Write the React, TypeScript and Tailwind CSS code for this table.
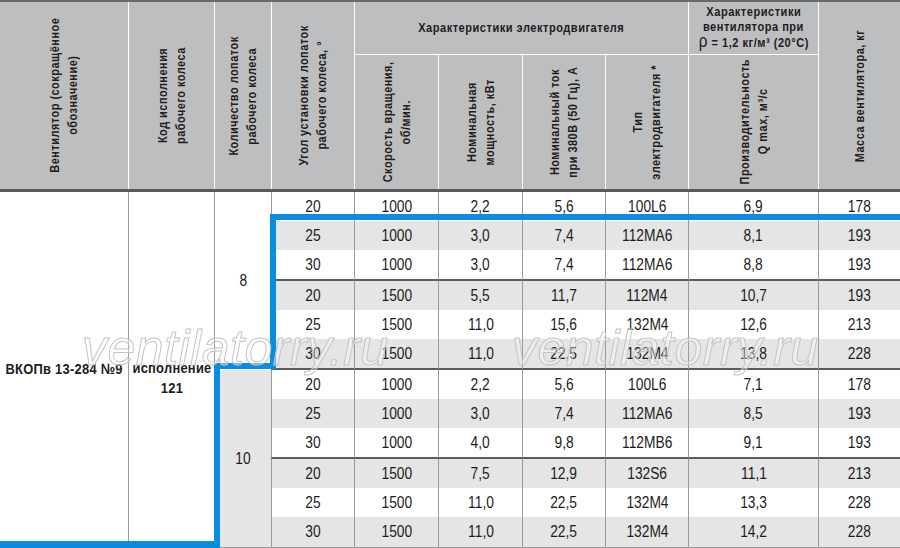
import React from "react";

const rows = [
  ["20", "1000", "2,2", "5,6", "100L6", "6,9", "178"],
  ["25", "1000", "3,0", "7,4", "112MA6", "8,1", "193"],
  ["30", "1000", "3,0", "7,4", "112MA6", "8,8", "193"],
  ["20", "1500", "5,5", "11,7", "112M4", "10,7", "193"],
  ["25", "1500", "11,0", "15,6", "132M4", "12,6", "213"],
  ["30", "1500", "11,0", "22,5", "132M4", "13,8", "228"],
  ["20", "1000", "2,2", "5,6", "100L6", "7,1", "178"],
  ["25", "1000", "3,0", "7,4", "112MA6", "8,5", "193"],
  ["30", "1000", "4,0", "9,8", "112MB6", "9,1", "193"],
  ["20", "1500", "7,5", "12,9", "132S6", "11,1", "213"],
  ["25", "1500", "11,0", "22,5", "132M4", "13,3", "228"],
  ["30", "1500", "11,0", "22,5", "132M4", "14,2", "228"],
];

const cols =
  "grid-cols-[128px_86px_57px_83px_84px_84px_83px_83px_130px_82px]";

// rotated header text, condensed along the reading direction
function VText({ lines }: { lines: React.ReactNode[] }) {
  return (
    <div className="[writing-mode:vertical-rl] rotate-180 scale-y-[0.84] text-center leading-[18px] whitespace-nowrap">
      {lines.map((l, i) => (
        <div key={i}>{l}</div>
      ))}
    </div>
  );
}

function Narrow({ children, k = "body" }: { children: React.ReactNode; k?: "body" | "head" }) {
  return (
    <span
      className={
        k === "head"
          ? "inline-block whitespace-nowrap scale-x-[0.85]"
          : "inline-block whitespace-nowrap scale-x-[0.86]"
      }
    >
      {children}
    </span>
  );
}

export default function App() {
  return (
    <div className="relative w-[900px] h-[548px] overflow-hidden bg-white font-['Liberation_Sans',Arial,sans-serif] text-[#1e1c1d]">
      {/* header */}
      <div
        className={`grid ${cols} grid-rows-[52px_135px] bg-[#bdbebf] border-t-2 border-t-[#6a6a6a] border-b-[3px] border-b-[#5b5b5b] text-[13px] font-bold tracking-[0.6px]`}
      >
        <div className="row-span-2 flex items-center justify-center">
          <VText lines={["Вентилятор (сокращённое", "обозначение)"]} />
        </div>
        <div className="row-span-2 flex items-center justify-center border-l border-white">
          <VText lines={["Код исполнения", "рабочего колеса"]} />
        </div>
        <div className="row-span-2 flex items-center justify-center border-l border-white">
          <VText lines={["Количество лопаток", "рабочего колеса"]} />
        </div>
        <div className="row-span-2 flex items-center justify-center border-l border-white">
          <VText lines={["Угол установки лопаток", "рабочего колеса, °"]} />
        </div>
        <div className="col-span-4 flex items-center justify-center border-l border-white">
          <Narrow k="head">Характеристики электродвигателя</Narrow>
        </div>
        <div className="flex flex-col items-center justify-center border-l border-white leading-[15px] pb-[2px]">
          <Narrow k="head">Характеристики</Narrow>
          <Narrow k="head">вентилятора при</Narrow>
          <Narrow k="head">
            <span className="text-[18px] font-normal">ρ</span> = 1,2 кг/м³ (20°C)
          </Narrow>
        </div>
        <div className="row-span-2 flex items-center justify-center border-l border-white">
          <VText lines={["Масса вентилятора, кг"]} />
        </div>
        <div className="flex items-center justify-center border-l border-t border-white">
          <VText lines={["Скорость вращения,", "об/мин."]} />
        </div>
        <div className="flex items-center justify-center border-l border-t border-white">
          <VText lines={["Номинальная", "мощность, кВт"]} />
        </div>
        <div className="flex items-center justify-center border-l border-t border-white">
          <VText lines={["Номинальный ток", "при 380В (50 Гц), А"]} />
        </div>
        <div className="flex items-center justify-center border-l border-t border-white">
          <VText lines={["Тип", "электродвигателя *"]} />
        </div>
        <div className="flex items-center justify-center border-l border-t border-white">
          <VText lines={["Производительность", "Q max, м³/с"]} />
        </div>
      </div>

      {/* body */}
      <div
        className={`grid ${cols} grid-rows-[29px_29px_31px_29px_29px_31px_29px_29px_31px_29px_29px_30px] border-b border-b-[#9a9a9a] text-[16px]`}
      >
        <div className="col-start-1 row-start-1 row-span-12 flex items-center justify-center text-[15px] font-bold tracking-[0.3px]">
          <Narrow>ВКОПв 13-284 №9</Narrow>
        </div>
        <div className="col-start-2 row-start-1 row-span-12 flex items-center justify-center border-l border-[#9a9a9a] text-[15px] font-bold tracking-[0.3px]">
          <div className="mt-[16px] flex flex-col items-center leading-[20px]">
            <Narrow>исполнение</Narrow>
            <Narrow>121</Narrow>
          </div>
        </div>
        <div className="col-start-3 row-start-1 row-span-6 flex items-center justify-center border-l border-[#9a9a9a]">
          <Narrow>8</Narrow>
        </div>
        <div className="col-start-3 row-start-7 row-span-6 flex items-center justify-center border-l border-[#9a9a9a] bg-[#e4e5e4]">
          <Narrow>10</Narrow>
        </div>
        {rows.map((r, i) =>
          r.map((v, j) => (
            <div
              key={`${i}-${j}`}
              className={`flex items-center justify-center border-l border-l-[#9a9a9a] ${
                i % 2 === 1 ? "bg-[#e4e5e4]" : "bg-white"
              } ${i === 2 || i === 5 || i === 8 ? "border-b-2 border-b-[#5c5c5c]" : ""}`}
            >
              <Narrow>{v}</Narrow>
            </div>
          ))
        )}
      </div>

      {/* highlighted outline */}
      <svg
        className="absolute left-0 top-0 pointer-events-none"
        width="900"
        height="548"
        viewBox="0 0 900 548"
      >
        <g fill="#0a8ce0">
          <rect x="270" y="214" width="630" height="6" />
          <rect x="270" y="214" width="6" height="155" />
          <rect x="214" y="363" width="62" height="6" />
          <rect x="214" y="363" width="6" height="185" />
          <rect x="0" y="541" width="220" height="7" />
        </g>
      </svg>

      {/* watermark */}
      <div className="absolute left-[82px] top-[323px] pointer-events-none italic text-[50px] tracking-[0.5px] leading-none text-[rgba(255,255,255,0.35)] [-webkit-text-stroke:1px_#c4c4c4]">
        ventilatorry.ru
      </div>
      <div className="absolute left-[512px] top-[323px] pointer-events-none italic text-[50px] tracking-[0.5px] leading-none text-[rgba(255,255,255,0.35)] [-webkit-text-stroke:1px_#c4c4c4]">
        ventilatorry.ru
      </div>
    </div>
  );
}
